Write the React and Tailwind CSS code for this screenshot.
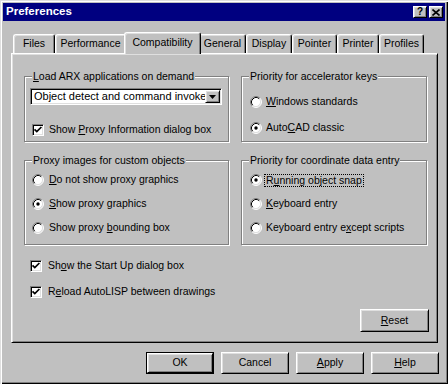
import React from "react";

const RAISED =
  "border border-t-white border-l-white border-r-black border-b-black shadow-[inset_1px_1px_0_#dfdfdf,inset_-1px_-1px_0_#808080]";
const SUNKEN =
  "border border-t-[#808080] border-l-[#808080] border-r-white border-b-white shadow-[inset_1px_1px_0_#000,inset_-1px_-1px_0_#dfdfdf]";

function Radio({ checked }) {
  return (
    <svg width="12" height="12" viewBox="0 0 12 12" className="shrink-0">
      <circle cx="6" cy="6" r="5" fill="#fff" />
      <path d="M2.11 9.89A5.5 5.5 0 0 1 9.89 2.11" stroke="#808080" fill="none" />
      <path d="M9.89 2.11A5.5 5.5 0 0 1 2.11 9.89" stroke="#fff" fill="none" />
      <path d="M2.82 9.18A4.5 4.5 0 0 1 9.18 2.82" stroke="#000" fill="none" />
      <path d="M9.18 2.82A4.5 4.5 0 0 1 2.82 9.18" stroke="#dfdfdf" fill="none" />
      {checked && <circle cx="6" cy="6" r="1.7" fill="#000" />}
    </svg>
  );
}

function Check() {
  return (
    <div className={`w-[12px] h-[12px] shrink-0 bg-white flex items-center justify-center ${SUNKEN}`}>
      <svg width="10" height="10" viewBox="0 0 10 10">
        <path d="M1.5 4.3 L3.8 6.6 L8.4 2" stroke="#000" strokeWidth="1.7" fill="none" />
      </svg>
    </div>
  );
}

function Group({ label, className, children }) {
  return (
    <div
      className={`relative border border-[#808080] shadow-[inset_1px_1px_0_#fff,1px_1px_0_#fff] ${className}`}
    >
      <div className="absolute -top-[8px] left-[7px] bg-[#c0c0c0] px-[1px] leading-[14px] whitespace-nowrap">
        {label}
      </div>
      {children}
    </div>
  );
}

function Btn({ children, isDefault }) {
  if (isDefault) {
    return (
      <div className="w-[68px] h-[22px] border border-black">
        <div className={`w-full h-full flex items-center justify-center ${RAISED}`}>{children}</div>
      </div>
    );
  }
  return (
    <div className={`w-[68px] h-[22px] flex items-center justify-center ${RAISED}`}>{children}</div>
  );
}

const tabs = [
  ["Files", "w-[42px]"],
  ["Performance", "w-[71px]"],
  ["Compatibility", "sel"],
  ["General", "w-[47px]"],
  ["Display", "w-[46px]"],
  ["Pointer", "w-[45px]"],
  ["Printer", "w-[42px]"],
  ["Profiles", "w-[45px]"],
];

export default function App() {
  return (
    <div className="relative w-[448px] h-[384px] bg-[#c0c0c0] overflow-hidden font-['Liberation_Sans',Arial,sans-serif] text-[10.5px] text-black">
      <div className="w-full h-full p-[3px] shadow-[inset_1px_1px_0_#dfdfdf,inset_2px_2px_0_#fff,inset_-1px_-1px_0_#000,inset_-2px_-2px_0_#808080] flex flex-col">
        {/* title bar */}
        <div className="h-[18px] bg-[#000080] flex items-center pl-[3px] pr-[2px]">
          <span className="text-white font-bold text-[11.5px] leading-none flex-1">Preferences</span>
          <div className={`w-[14px] h-[12px] bg-[#c0c0c0] flex items-center justify-center ${RAISED}`}>
            <span className="font-bold text-[10px] leading-none">?</span>
          </div>
          <div className={`ml-[2px] w-[14px] h-[12px] bg-[#c0c0c0] flex items-center justify-center ${RAISED}`}>
            <svg width="8" height="7" viewBox="0 0 8 7">
              <path d="M0.5 0.5 L7.5 6.5 M7.5 0.5 L0.5 6.5" stroke="#000" strokeWidth="1.6" />
            </svg>
          </div>
        </div>

        {/* body */}
        <div className="pl-[8px] flex flex-col">
          <div className="mt-[11px] ml-[2px] h-[21px] flex items-end">
            {tabs.map(([t, w]) =>
              w === "sel" ? (
                <div
                  key={t}
                  className="relative z-10 -mx-[2px] -mb-[1px] w-[77px] h-[22px] bg-[#c0c0c0] flex items-center justify-center pb-[2px] border-t border-l border-r border-t-white border-l-white border-r-black rounded-t-[3px] shadow-[inset_1px_1px_0_#dfdfdf,inset_-1px_0_0_#808080]"
                >
                  {t}
                </div>
              ) : (
                <div
                  key={t}
                  className={`${w} h-[19px] flex items-center justify-center border-t border-l border-r border-t-white border-l-white border-r-black rounded-t-[3px] shadow-[inset_1px_1px_0_#dfdfdf,inset_-1px_0_0_#808080]`}
                >
                  {t}
                </div>
              )
            )}
          </div>

          {/* panel */}
          <div className="w-[427px] h-[290px] border border-t-white border-l-white border-r-black border-b-black shadow-[inset_1px_1px_0_#dfdfdf,inset_-1px_-1px_0_#808080] pt-[22px] pl-[12px] pr-[8px] flex flex-col">
            <div className="grid grid-cols-[205px_186px] gap-x-[12px] gap-y-[18px]">
              <Group
                label={<><u>L</u>oad ARX applications on demand</>}
                className="h-[66px] pl-[5px] pt-[11px] flex flex-col"
              >
                <div className={`w-[192px] h-[17px] bg-white flex items-center p-[1px] ${SUNKEN}`}>
                  <span className="flex-1 pl-[2px] whitespace-nowrap overflow-hidden text-[11px] leading-none">
                    Object detect and command invoke
                  </span>
                  <div className={`w-[15px] h-full bg-[#c0c0c0] flex items-center justify-center ${RAISED}`}>
                    <svg width="7" height="4" viewBox="0 0 7 4">
                      <path d="M0 0H7L3.5 4Z" fill="#000" />
                    </svg>
                  </div>
                </div>
                <div className="mt-[18px] ml-[2px] h-[14px] flex items-center gap-[5px]">
                  <Check />
                  <span>
                    Show <u>P</u>roxy Information dialog box
                  </span>
                </div>
              </Group>

              <Group label="Priority for accelerator keys" className="h-[66px] pl-[8px] pt-[18px] flex flex-col gap-[12px]">
                <div className="h-[14px] flex items-center gap-[4px]">
                  <Radio />
                  <span>
                    <u>W</u>indows standards
                  </span>
                </div>
                <div className="h-[14px] flex items-center gap-[4px]">
                  <Radio checked />
                  <span>
                    Auto<u>C</u>AD classic
                  </span>
                </div>
              </Group>

              <Group label="Proxy images for custom objects" className="h-[85px] pl-[7px] pt-[12px] flex flex-col gap-[10px]">
                <div className="h-[14px] flex items-center gap-[5px]">
                  <Radio />
                  <span>
                    <u>D</u>o not show proxy graphics
                  </span>
                </div>
                <div className="h-[14px] flex items-center gap-[5px]">
                  <Radio checked />
                  <span>
                    <u>S</u>how proxy graphics
                  </span>
                </div>
                <div className="h-[14px] flex items-center gap-[5px]">
                  <Radio />
                  <span>
                    Show proxy <u>b</u>ounding box
                  </span>
                </div>
              </Group>

              <Group label="Priority for coordinate data entry" className="h-[85px] pl-[8px] pt-[12px] flex flex-col gap-[10px]">
                <div className="h-[14px] flex items-center gap-[2px]">
                  <Radio checked />
                  <span className="border border-dotted border-black px-[1px] leading-[11px]">
                    R<u>u</u>nning object snap
                  </span>
                </div>
                <div className="h-[14px] flex items-center gap-[4px]">
                  <Radio />
                  <span>
                    <u>K</u>eyboard entry
                  </span>
                </div>
                <div className="h-[14px] flex items-center gap-[4px]">
                  <Radio />
                  <span>
                    Keyboard entry e<u>x</u>cept scripts
                  </span>
                </div>
              </Group>
            </div>

            <div className="mt-[14px] ml-[6px] h-[14px] flex items-center gap-[6px]">
              <Check />
              <span>
                Sh<u>o</u>w the Start Up dialog box
              </span>
            </div>
            <div className="mt-[12px] ml-[6px] h-[14px] flex items-center gap-[6px]">
              <Check />
              <span>
                R<u>e</u>load AutoLISP between drawings
              </span>
            </div>

            <div className={`mt-[10px] self-end w-[69px] h-[23px] flex items-center justify-center ${RAISED}`}>
              <span>
                <u>R</u>eset
              </span>
            </div>
          </div>

          {/* bottom buttons */}
          <div className="mt-[9px] pr-[6px] flex justify-end gap-[7px]">
            <Btn isDefault>OK</Btn>
            <Btn>Cancel</Btn>
            <Btn>
              <span>
                <u>A</u>pply
              </span>
            </Btn>
            <Btn>
              <span>
                <u>H</u>elp
              </span>
            </Btn>
          </div>
        </div>
      </div>
    </div>
  );
}
